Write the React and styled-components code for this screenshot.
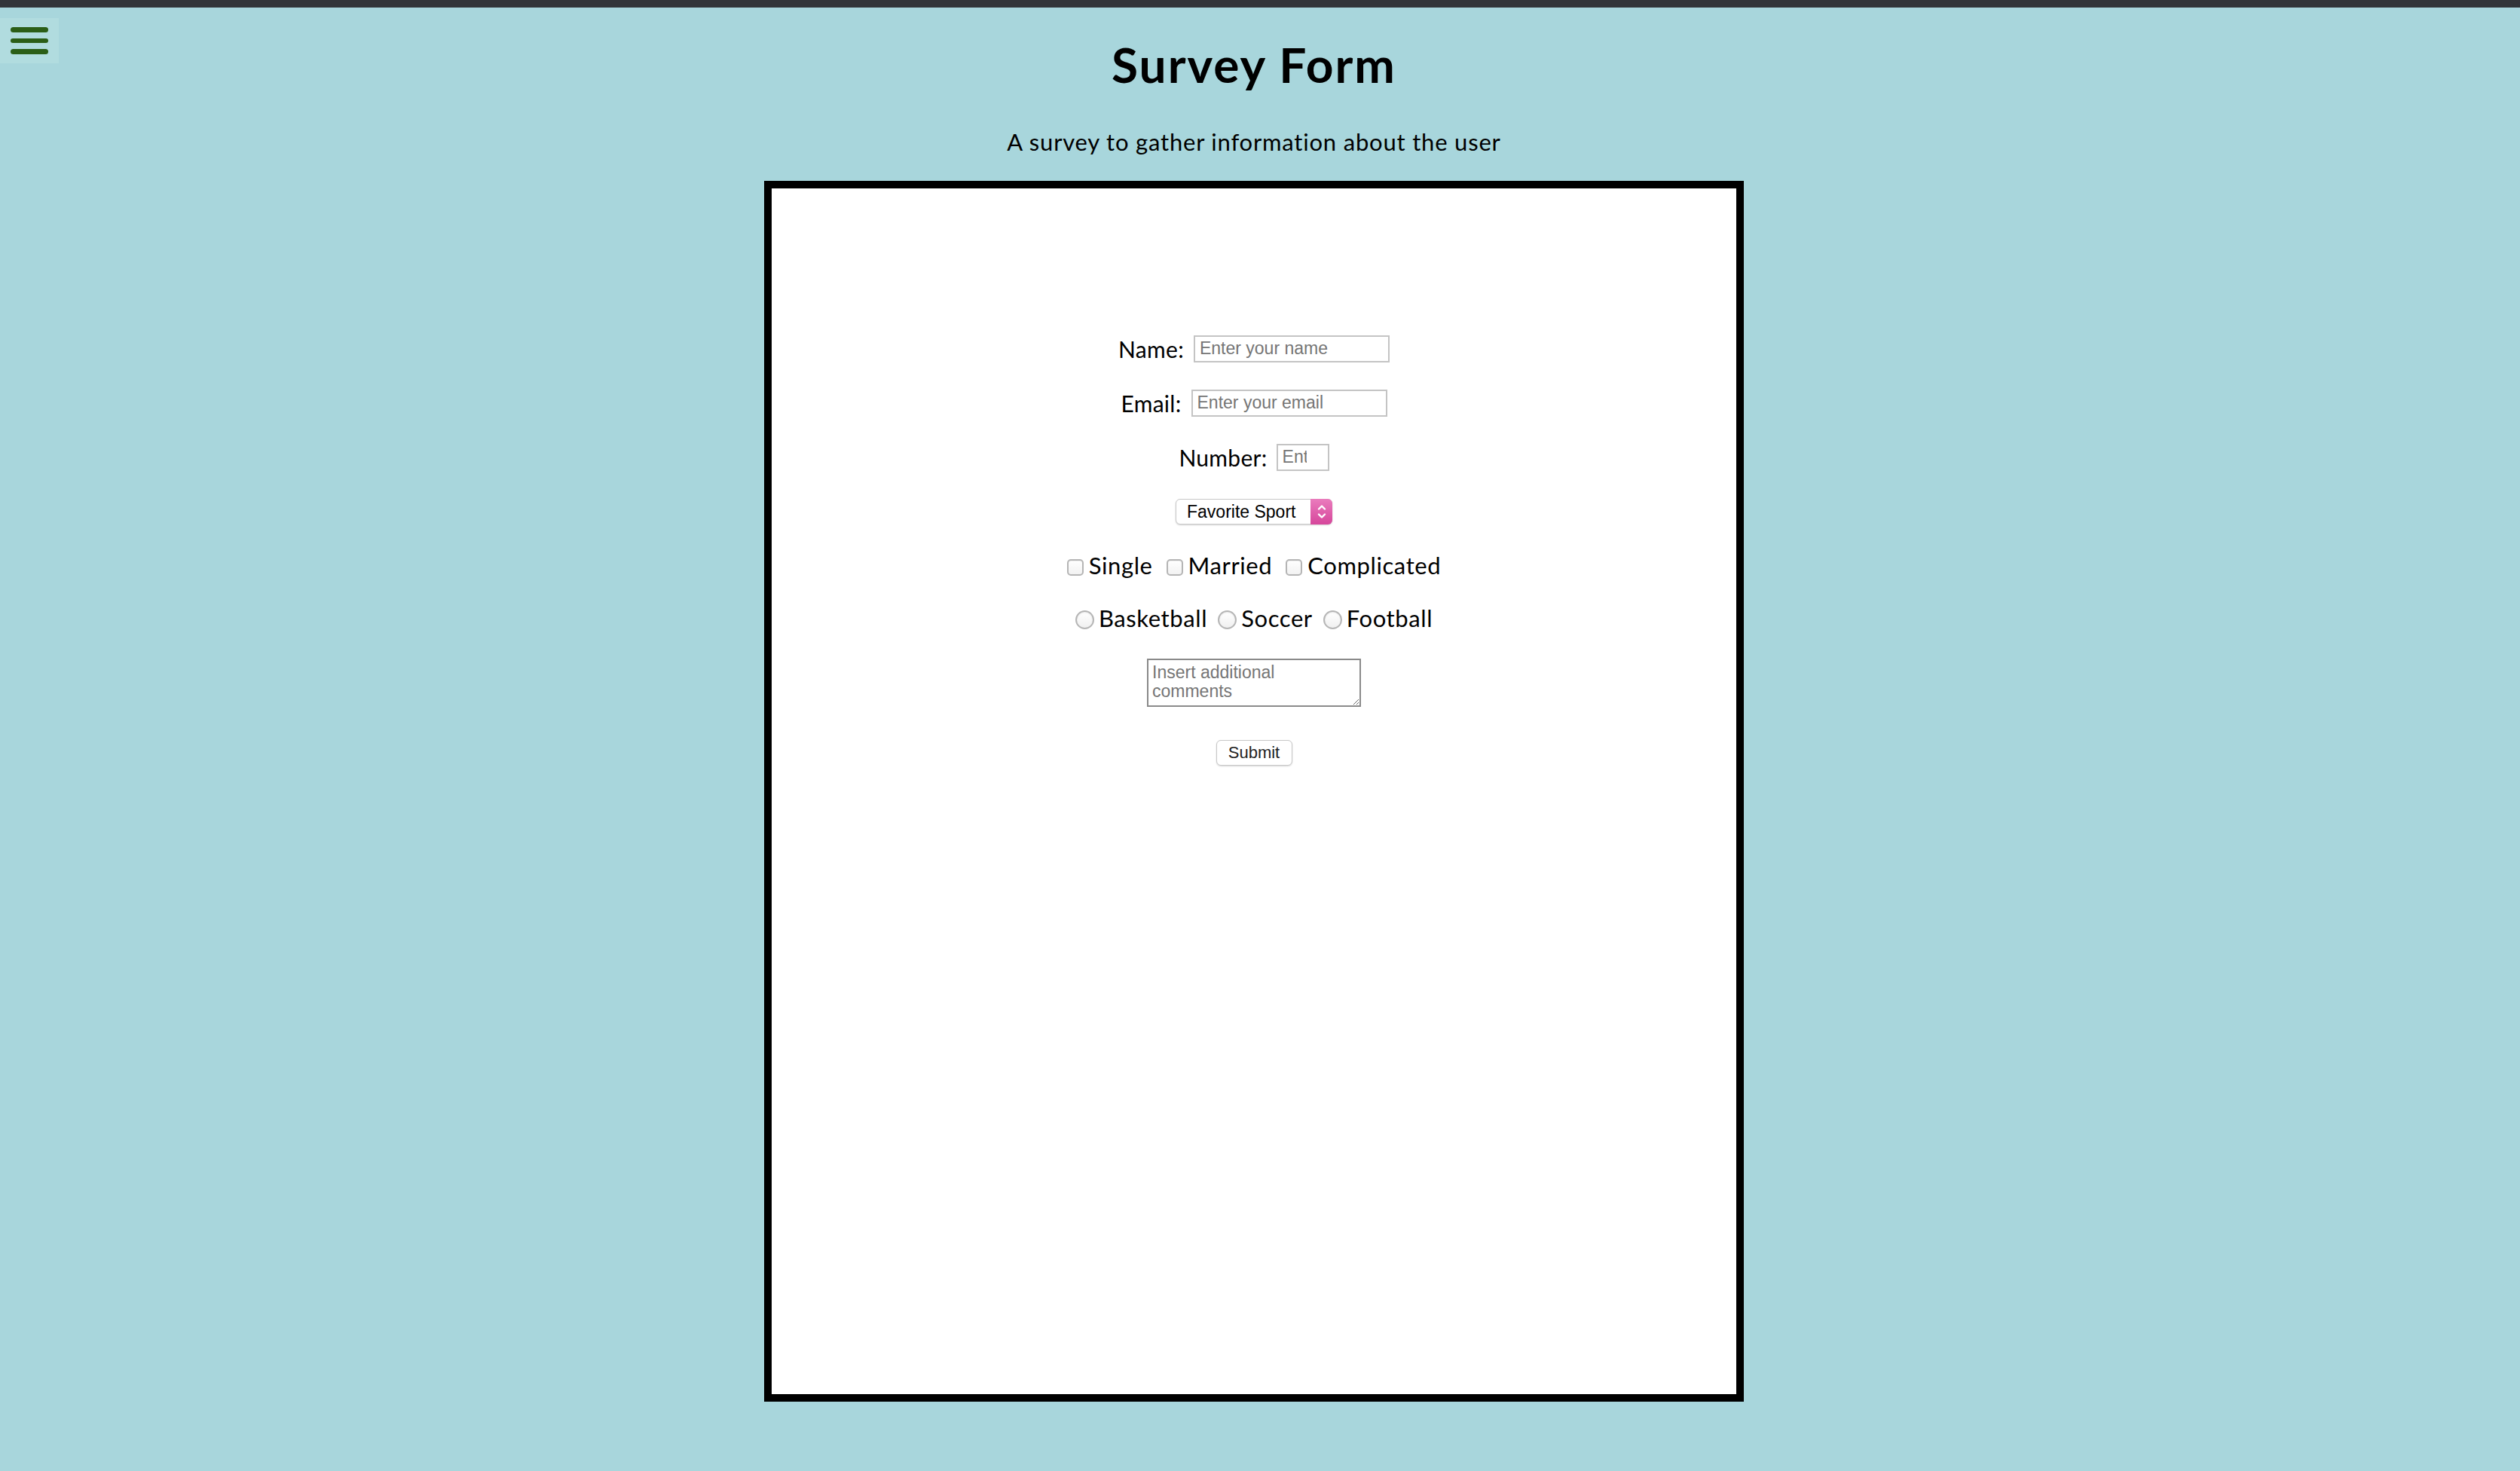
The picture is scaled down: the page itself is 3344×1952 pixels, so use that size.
import styled, { createGlobalStyle } from 'styled-components';

const GlobalStyle = createGlobalStyle`
  html, body {
    margin: 0;
    padding: 0;
    background: #a8d6dc;
  }
  body {
    font-family: Lato, "Open Sans", sans-serif;
    color: #000;
  }
`;

const TopBar = styled.div`
  height: 10px;
  background: #323539;
`;

const Page = styled.div`
  position: relative;
  box-sizing: border-box;
  padding-right: 16px;
  min-height: 1942px;
  display: flex;
  flex-direction: column;
  align-items: center;
`;

const MenuButton = styled.button`
  position: absolute;
  top: 14px;
  left: 0;
  width: 78px;
  height: 60px;
  box-sizing: border-box;
  padding: 12px 14px;
  border: none;
  background: #b1dcdf;
  display: flex;
  flex-direction: column;
  gap: 8px;
  cursor: pointer;
`;

const MenuBar = styled.span`
  display: block;
  width: 50px;
  height: 8px;
  border-radius: 4px;
  background: #2b5e17;
`;

const Title = styled.h1`
  margin: 38px 0 0;
  font-size: 64px;
  line-height: 1.2;
  font-weight: 700;
  letter-spacing: 2px;
`;

const Subtitle = styled.p`
  margin: 45px 0 0;
  font-size: 31px;
  line-height: 1.2;
  letter-spacing: 0.8px;
`;

const Form = styled.form`
  box-sizing: border-box;
  width: 1300px;
  height: 1620px;
  margin-top: 33px;
  padding-top: 177px;
  border: 10px solid #000;
  background: #fff;
  display: flex;
  flex-direction: column;
`;

const Row = styled.div`
  height: ${(p) => p.$h || 72}px;
  display: flex;
  justify-content: center;
  align-items: center;
  gap: ${(p) => p.$gap || 0}px;
`;

const Label = styled.label`
  font-size: 30px;
  line-height: 1;
  letter-spacing: 0.3px;
`;

const TextInput = styled.input`
  box-sizing: border-box;
  width: ${(p) => p.$w}px;
  height: 36px;
  padding: 0 ${(p) => p.$pr || 6}px 0 6px;
  border: 2px solid #c4c4c4;
  background: #fff;
  font-family: "Liberation Sans", Arial, sans-serif;
  font-size: 23px;
  outline: none;
  &::placeholder {
    color: #757575;
  }
`;

const SelectWrap = styled.div`
  position: relative;
  width: 208px;
  height: 34px;
`;

const Select = styled.select`
  appearance: none;
  box-sizing: border-box;
  width: 100%;
  height: 100%;
  padding: 0 0 0 14px;
  border: 1px solid #c9c9c9;
  border-radius: 6px;
  background: #fff;
  box-shadow: 0 1px 2px rgba(0, 0, 0, 0.18);
  font-family: "Liberation Sans", Arial, sans-serif;
  font-size: 23px;
  color: #000;
`;

const SelectArrow = styled.span`
  position: absolute;
  top: 0;
  right: 0;
  width: 29px;
  height: 34px;
  border-radius: 0 6px 6px 0;
  background: linear-gradient(#ea7cbd, #d6469b);
  display: flex;
  align-items: center;
  justify-content: center;
  pointer-events: none;
`;

const Option = styled.label`
  display: flex;
  align-items: center;
  gap: ${(p) => p.$gap}px;
  font-size: 31px;
  line-height: 1;
  letter-spacing: 0.6px;
`;

const Check = styled.input`
  appearance: none;
  margin: 4px 0 0;
  width: 22px;
  height: 22px;
  box-sizing: border-box;
  border: 2px solid #b5b5b5;
  border-radius: 5px;
  background: linear-gradient(#fff, #f2f2f2);
  box-shadow: inset 0 1px 1px rgba(0, 0, 0, 0.06);
`;

const Radio = styled.input`
  appearance: none;
  margin: 4px 0 0;
  width: 25px;
  height: 25px;
  box-sizing: border-box;
  border: 2px solid #b5b5b5;
  border-radius: 50%;
  background: linear-gradient(#fff, #f0f0f0);
  box-shadow: inset 0 1px 2px rgba(0, 0, 0, 0.08);
`;

const Comments = styled.textarea`
  box-sizing: border-box;
  width: 284px;
  height: 64px;
  padding: 4px 24px 2px 5px;
  border: 2px solid #8a8a8a;
  font-family: "Liberation Sans", Arial, sans-serif;
  font-size: 23px;
  line-height: 25px;
  outline: none;
  &::placeholder {
    color: #757575;
  }
`;

const SubmitButton = styled.button`
  box-sizing: border-box;
  width: 101px;
  height: 34px;
  padding: 0;
  border: 1px solid #c7c7c7;
  border-radius: 6px;
  background: #fff;
  box-shadow: 0 1px 2px rgba(0, 0, 0, 0.15);
  font-family: "Liberation Sans", Arial, sans-serif;
  font-size: 22px;
  color: #222;
`;

const ChevronsIcon = () => (
  <svg width="14" height="24" viewBox="0 0 14 24" fill="none" stroke="#fff" strokeWidth="2.4" strokeLinecap="round" strokeLinejoin="round">
    <path d="M3 8.5 7 4.5l4 4" />
    <path d="M3 15.5l4 4 4-4" />
  </svg>
);

export default function App() {
  return (
    <>
      <GlobalStyle />
      <TopBar />
      <Page>
        <MenuButton type="button" aria-label="Menu">
          <MenuBar />
          <MenuBar />
          <MenuBar />
        </MenuButton>
        <Title id="title">Survey Form</Title>
        <Subtitle id="description">A survey to gather information about the user</Subtitle>
        <Form id="survey-form" onSubmit={(e) => e.preventDefault()}>
          <Row $gap={13}>
            <Label htmlFor="name">Name:</Label>
            <TextInput id="name" type="text" $w={260} placeholder="Enter your name" />
          </Row>
          <Row $gap={13}>
            <Label htmlFor="email">Email:</Label>
            <TextInput id="email" type="email" $w={260} placeholder="Enter your email" />
          </Row>
          <Row $gap={12}>
            <Label htmlFor="number">Number:</Label>
            <TextInput id="number" type="text" $w={70} $pr={28} placeholder="Enter your number" />
          </Row>
          <Row>
            <SelectWrap>
              <Select id="dropdown" defaultValue="">
                <option value="" disabled>Favorite Sport</option>
                <option value="basketball">Basketball</option>
                <option value="soccer">Soccer</option>
                <option value="football">Football</option>
              </Select>
              <SelectArrow>
                <ChevronsIcon />
              </SelectArrow>
            </SelectWrap>
          </Row>
          <Row $gap={18}>
            <Option $gap={7}><Check type="checkbox" />Single</Option>
            <Option $gap={7}><Check type="checkbox" />Married</Option>
            <Option $gap={7}><Check type="checkbox" />Complicated</Option>
          </Row>
          <Row $h={68} $gap={14}>
            <Option $gap={6}><Radio type="radio" name="sport" />Basketball</Option>
            <Option $gap={6}><Radio type="radio" name="sport" />Soccer</Option>
            <Option $gap={6}><Radio type="radio" name="sport" />Football</Option>
          </Row>
          <Row $h={102}>
            <Comments placeholder="Insert additional comments" />
          </Row>
          <Row $h={84}>
            <SubmitButton type="submit">Submit</SubmitButton>
          </Row>
        </Form>
      </Page>
    </>
  );
}
